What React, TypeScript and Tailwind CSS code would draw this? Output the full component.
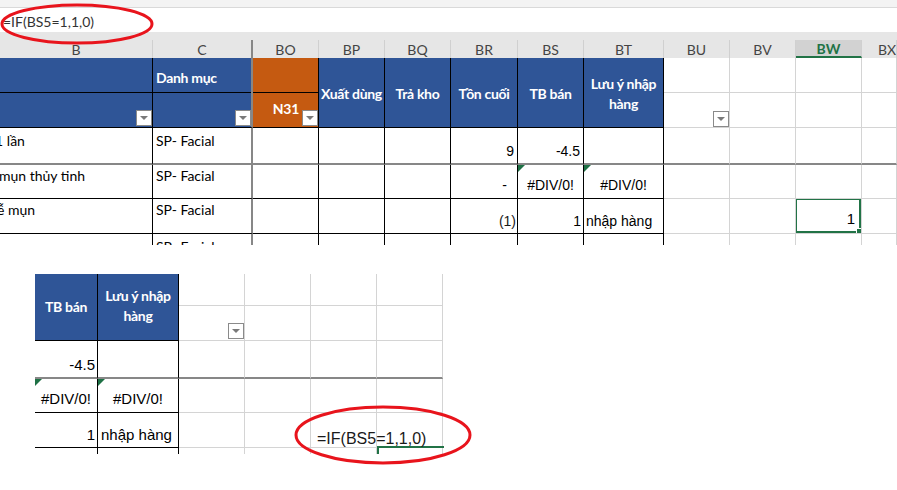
import React from "react";

const W = [153, 100, 66, 66, 66, 67, 66, 80, 66, 66, 66, 35];
const LETTERS = ["B", "C", "BO", "BP", "BQ", "BR", "BS", "BT", "BU", "BV", "BW", "BX"];

const calibri = { fontFamily: "Lato, 'Noto Sans', sans-serif" };
const arial = { fontFamily: "'Liberation Sans', Arial, sans-serif" };

function FilterBtn() {
  return (
    <div className="w-[16px] h-[16px] bg-white border border-[#8a8a8a] flex items-center justify-center shrink-0">
      <div className="w-0 h-0 border-l-[4px] border-r-[4px] border-t-[4px] border-l-transparent border-r-transparent border-t-[#7a7a7a]" />
    </div>
  );
}

function Tri() {
  return (
    <div className="absolute left-0 top-0 w-0 h-0 border-t-[7px] border-r-[7px] border-t-[#1e7145] border-r-transparent" />
  );
}

// right border per column in the data area
function rightBorder(i: number) {
  if (i === 1) return "border-r-2 border-r-[#878787]";
  if (i <= 7) return "border-r border-r-black";
  return "border-r border-r-[#d4d4d4]";
}

function bottomBorder(i: number) {
  return i <= 7 ? "border-b border-b-black" : "border-b border-b-[#d4d4d4]";
}

type Row = { h: number; thick?: boolean; cells: Record<number, React.ReactNode> };

const rows: Row[] = [
  {
    h: 37,
    thick: true,
    cells: {
      0: <span className="ml-[-5px] mt-[2px]">1 lần</span>,
      1: <span className="ml-[3px] mt-[2px]">SP- Facial</span>,
      5: <div className="mt-auto ml-auto mr-[3px] mb-[1px]" style={arial}>9</div>,
      6: <div className="mt-auto ml-auto mr-[3px] mb-[1px]" style={arial}>-4.5</div>,
    },
  },
  {
    h: 34,
    cells: {
      0: <span className="ml-[-1px]">mụn thủy tinh</span>,
      1: <span className="ml-[3px]">SP- Facial</span>,
      5: <div className="mt-auto ml-auto mr-[10px] mb-[2px]" style={arial}>-</div>,
      6: (
        <>
          <Tri />
          <div className="mt-auto mx-auto mb-[2px]" style={arial}>#DIV/0!</div>
        </>
      ),
      7: (
        <>
          <Tri />
          <div className="mt-auto mx-auto mb-[2px]" style={arial}>#DIV/0!</div>
        </>
      ),
    },
  },
  {
    h: 35,
    cells: {
      0: <span className="ml-[-3px]">ễ mụn</span>,
      1: <span className="ml-[3px]">SP- Facial</span>,
      5: <div className="mt-auto ml-auto mr-[1px] mb-[1px] text-[#1a1a1a]" style={arial}>(1)</div>,
      6: <div className="mt-auto ml-auto mr-[2px] mb-[1px]" style={arial}>1</div>,
      7: <div className="mt-auto ml-[2px] mb-[1px]" style={arial}>nhập hàng</div>,
    },
  },
  {
    h: 11,
    cells: {
      0: <span className="ml-[-1px] mt-[2px]">ụn</span>,
      1: <span className="ml-[3px] mt-[2px]">SP- Facial</span>,
    },
  },
];

function HeaderBlock() {
  const blue = "bg-[#2f5597]";
  return (
    <div className="flex h-[70px] text-white font-bold text-[14px] whitespace-nowrap tracking-[-0.3px]" style={calibri}>
      <div className={`w-[153px] flex flex-col ${blue} border-r border-black border-b`}>
        <div className="h-[35px] border-b border-black" />
        <div className="flex-1 flex items-end justify-end pb-[1px] pr-[0px]">
          <FilterBtn />
        </div>
      </div>
      <div className={`w-[100px] flex flex-col ${blue} border-r-2 border-r-[#878787] border-b border-b-black`}>
        <div className="h-[35px] border-b border-black flex items-center pl-[3px] pt-[4px]">Danh mục</div>
        <div className="flex-1 flex items-end justify-end pb-[1px]">
          <FilterBtn />
        </div>
      </div>
      <div className="w-[66px] flex flex-col bg-[#c55a11] border-r border-black border-b">
        <div className="h-[35px] border-b border-black" />
        <div className="flex-1 flex items-end justify-end pb-[1px] gap-[3px]">
          <span className="mb-[7px]">N31</span>
          <FilterBtn />
        </div>
      </div>
      {[
        ["Xuất dùng"],
        ["Trả kho"],
        ["Tồn cuối"],
        ["TB bán"],
        ["Lưu ý nhập", "hàng"],
      ].map((t, k) => (
        <div
          key={k}
          className={`${blue} border-r border-black border-b flex flex-col items-center justify-center leading-[20px] pt-[2px] overflow-hidden`}
          style={{ width: W[3 + k] }}
        >
          {t.map((s) => (
            <span key={s}>{s}</span>
          ))}
        </div>
      ))}
      {[8, 9, 10, 11].map((i) => (
        <div key={i} className="flex flex-col border-r border-[#d4d4d4] border-b bg-white" style={{ width: W[i] }}>
          <div className="h-[35px] border-b border-[#d4d4d4]" />
          <div className="flex-1 flex items-end justify-end pb-[0px] pr-[0px]">{i === 8 && <FilterBtn />}</div>
        </div>
      ))}
    </div>
  );
}

function LowerSheet() {
  const cols = [63, 81, 66, 66, 66, 66];
  const vb = (i: number) => (i <= 1 ? "border-r border-r-black" : "border-r border-r-[#d4d4d4]");
  const hb = (i: number) => (i <= 1 ? "border-b border-b-black" : "border-b border-b-[#d4d4d4]");
  const lowRows: { h: number; thick?: boolean; cells: Record<number, React.ReactNode> }[] = [
    {
      h: 38,
      thick: true,
      cells: {
        0: <div className="mt-auto ml-auto mr-[2px] mb-[1px]" style={arial}>-4.5</div>,
      },
    },
    {
      h: 34,
      cells: {
        0: (
          <>
            <Tri />
            <div className="mt-auto mx-auto mb-[2px]" style={arial}>#DIV/0!</div>
          </>
        ),
        1: (
          <>
            <Tri />
            <div className="mt-auto mx-auto mb-[2px]" style={arial}>#DIV/0!</div>
          </>
        ),
      },
    },
    {
      h: 35,
      cells: {
        0: <div className="mt-auto ml-auto mr-[2px] mb-[1px]" style={arial}>1</div>,
        1: <div className="mt-auto ml-[3px] mb-[1px]" style={arial}>nhập hàng</div>,
      },
    },
    { h: 6, cells: {} },
  ];
  return (
    <div className="pl-[35px] pt-[29px] text-[15px] text-black">
      <div className="flex h-[67px] font-bold text-white text-[14px] tracking-[-0.3px] whitespace-nowrap" style={calibri}>
        <div className="w-[63px] bg-[#2f5597] border-r border-b border-black flex items-center justify-center pb-[2px]">
          TB bán
        </div>
        <div className="w-[81px] bg-[#2f5597] border-r border-b border-black flex flex-col items-center justify-center leading-[20px] pb-[2px]">
          <span>Lưu ý nhập</span>
          <span>hàng</span>
        </div>
        {[2, 3, 4, 5].map((i) => (
          <div key={i} className="w-[66px] flex flex-col border-r border-b border-[#d4d4d4]">
            <div className="h-[32px] border-b border-[#d4d4d4]" />
            <div className="flex-1 flex items-end justify-end pb-[1px] pr-[0px]">{i === 2 && <FilterBtn />}</div>
          </div>
        ))}
      </div>
      {lowRows.map((r, ri) => (
        <div key={ri} className="flex" style={{ height: r.h }}>
          {cols.map((w, i) => (
            <div
              key={i}
              className={`relative flex overflow-hidden whitespace-nowrap ${vb(i)} ${
                r.thick ? "border-b-2 border-b-[#878787]" : ri === 3 ? "" : hb(i)
              }`}
              style={{ width: w }}
            >
              {r.cells[i]}
            </div>
          ))}
        </div>
      ))}
    </div>
  );
}

export default function App() {
  return (
    <div className="relative w-[897px] h-[490px] overflow-hidden bg-white text-black">
      {/* formula bar */}
      <div className="h-[8px] bg-[#f3f3f3] border-b border-[#d9d9d9]" />
      <div className="h-[24px] bg-white pl-[3px] pt-[3px] text-[14px] text-[#333]" style={calibri}>
        =IF(BS5=1,1,0)
      </div>
      <div className="h-[8px] bg-[#e6e6e6]" />
      {/* column letters */}
      <div className="flex h-[18px] bg-[#e6e6e6] text-[14px] text-[#444]" style={calibri}>
        {LETTERS.map((l, i) => (
          <div
            key={l}
            className={`flex items-center justify-center overflow-hidden ${
              i === 1 ? "border-r-2 border-r-[#878787]" : "border-r border-r-[#d0d0d0]"
            } ${i === 10 ? "bg-[#d2d2d2] text-[#217346] font-bold border-b-2 border-b-[#217346]" : ""} ${
              i === 11 ? "justify-start pl-[16px]" : ""
            }`}
            style={{ width: W[i] }}
          >
            {l}
          </div>
        ))}
      </div>
      <HeaderBlock />
      {/* data rows */}
      <div className="text-[14px]" style={calibri}>
        {rows.map((r, ri) => (
          <div key={ri} className="flex" style={{ height: r.h }}>
            {W.map((w, i) => (
              <div
                key={i}
                className={`relative flex overflow-hidden whitespace-nowrap ${rightBorder(i)} ${
                  r.thick ? "border-b-2 border-b-[#878787]" : ri === 3 ? "" : bottomBorder(i)
                }`}
                style={{ width: w }}
              >
                {r.cells[i]}
                {ri === 2 && i === 10 && (
                  <div className="absolute inset-0 left-[-1px] top-[-1px] border-2 border-[#217346] flex items-end justify-end pr-[4px] pb-[1px] text-[15px]">
                    <span style={arial}>1</span>
                    <div className="absolute right-[-3px] bottom-[-3px] w-[6px] h-[6px] bg-[#217346] border border-white" />
                  </div>
                )}
              </div>
            ))}
          </div>
        ))}
      </div>
      <LowerSheet />
      {/* lower selection edge */}
      <div className="absolute left-[377px] top-[446px] w-[67px] h-[8px] border-t-2 border-l-2 border-[#217346]" />
      {/* formula typed into the lower cell */}
      <div className="absolute left-[317px] top-[427px] text-[16px] text-[#1a1a1a] whitespace-nowrap" style={arial}>
        =IF(BS5=1,1,0)
      </div>
      {/* red ellipses */}
      <svg className="absolute left-0 top-0" width="897" height="490">
        <ellipse cx="77" cy="24" rx="75" ry="19" fill="none" stroke="#e8141c" strokeWidth="3" />
        <ellipse cx="383" cy="435" rx="87" ry="28" fill="none" stroke="#e8141c" strokeWidth="3" />
      </svg>
    </div>
  );
}
